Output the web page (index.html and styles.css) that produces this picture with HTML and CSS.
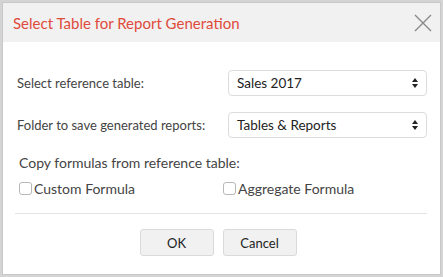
FILE: index.html
```html
<!DOCTYPE html>
<html lang="en">
<head>
  <meta charset="UTF-8" />
  <title>Select Table for Report Generation</title>
  <link rel="stylesheet" href="styles.css">
</head>
<body>
  <div class="dialog">
    <div class="dialog-head">
      <h2>Select Table for Report Generation</h2>
      <button class="close" aria-label="Close">
        <svg width="18" height="18" viewBox="0 0 18 18"><path d="M1 1L17 17M17 1L1 17" stroke="#8a8a8a" stroke-width="1.4" fill="none"/></svg>
      </button>
    </div>

    <div class="dialog-body">
      <div class="row">
        <label>Select reference table:</label>
        <div class="select">Sales 2017<span class="arrows"></span></div>
      </div>
      <div class="row">
        <label>Folder to save generated reports:</label>
        <div class="select">Tables &amp; Reports<span class="arrows"></span></div>
      </div>

      <p class="copy-title">Copy formulas from reference table:</p>
      <div class="checks">
        <label class="check"><span class="box"></span>Custom Formula</label>
        <label class="check"><span class="box"></span>Aggregate Formula</label>
      </div>

      <div class="actions">
        <button class="btn">OK</button>
        <button class="btn">Cancel</button>
      </div>
    </div>
  </div>
</body>
</html>
```

FILE: styles.css
```css
* {
  margin: 0;
  padding: 0;
  box-sizing: border-box;
  font-family: 'Lato', 'Open Sans', sans-serif;
}

body {
  background: #d4d4d4;
  width: 443px;
  height: 277px;
  overflow: hidden;
  padding: 2px 2px 0 2px;
}

.dialog {
  background: white;
  height: 273px;
  border: 1px solid #c8c8c8;
}

.dialog-head {
  background: #f1f1f1;
  height: 39px;
  display: flex;
  align-items: center;
  justify-content: space-between;
  padding: 0 7px 0 10px;
}

.dialog-head h2 {
  font-size: 15px;
  font-weight: 400;
  color: #e04a3b;
}

.close {
  background: none;
  border: none;
  width: 20px;
  height: 20px;
  display: flex;
  align-items: center;
  justify-content: center;
}

.dialog-body {
  padding: 28px 13px 0 12px;
}

.row {
  display: flex;
  align-items: center;
  height: 26px;
  margin-bottom: 16px;
}

.row label {
  width: 213px;
  padding-left: 2px;
  font-size: 13px;
  color: #444;
}

.select {
  flex: 1;
  height: 26px;
  border: 1px solid #dcdcdc;
  border-radius: 4px;
  display: flex;
  align-items: center;
  justify-content: space-between;
  padding: 0 7px 0 8px;
  font-size: 13.5px;
  color: #222;
}

.arrows {
  width: 7px;
  height: 10px;
  position: relative;
}

.arrows::before,
.arrows::after {
  content: '';
  position: absolute;
  left: 0;
  border-left: 3.5px solid transparent;
  border-right: 3.5px solid transparent;
}

.arrows::before {
  top: 0;
  border-bottom: 4px solid #222;
}

.arrows::after {
  bottom: 0;
  border-top: 4px solid #222;
}

.copy-title {
  font-size: 14px;
  color: #444;
  margin-top: 5px;
  padding-left: 4px;
}

.checks {
  display: flex;
  margin-top: 9px;
  padding-left: 4px;
  padding-bottom: 16px;
  border-bottom: 1px solid #e4e4e4;
}

.check {
  display: flex;
  align-items: center;
  font-size: 14px;
  color: #444;
  width: 211px;
}

.box {
  width: 13px;
  height: 13px;
  border: 1px solid #b8b8b8;
  border-radius: 3px;
  margin-right: 2px;
}

.actions {
  display: flex;
  justify-content: center;
  gap: 9px;
  margin-top: 15px;
  padding-right: 6px;
}

.btn {
  width: 74px;
  height: 27px;
  background: #f1f1f1;
  border: 1px solid #dadada;
  border-radius: 3px;
  font-size: 13px;
  color: #222;
}
```
